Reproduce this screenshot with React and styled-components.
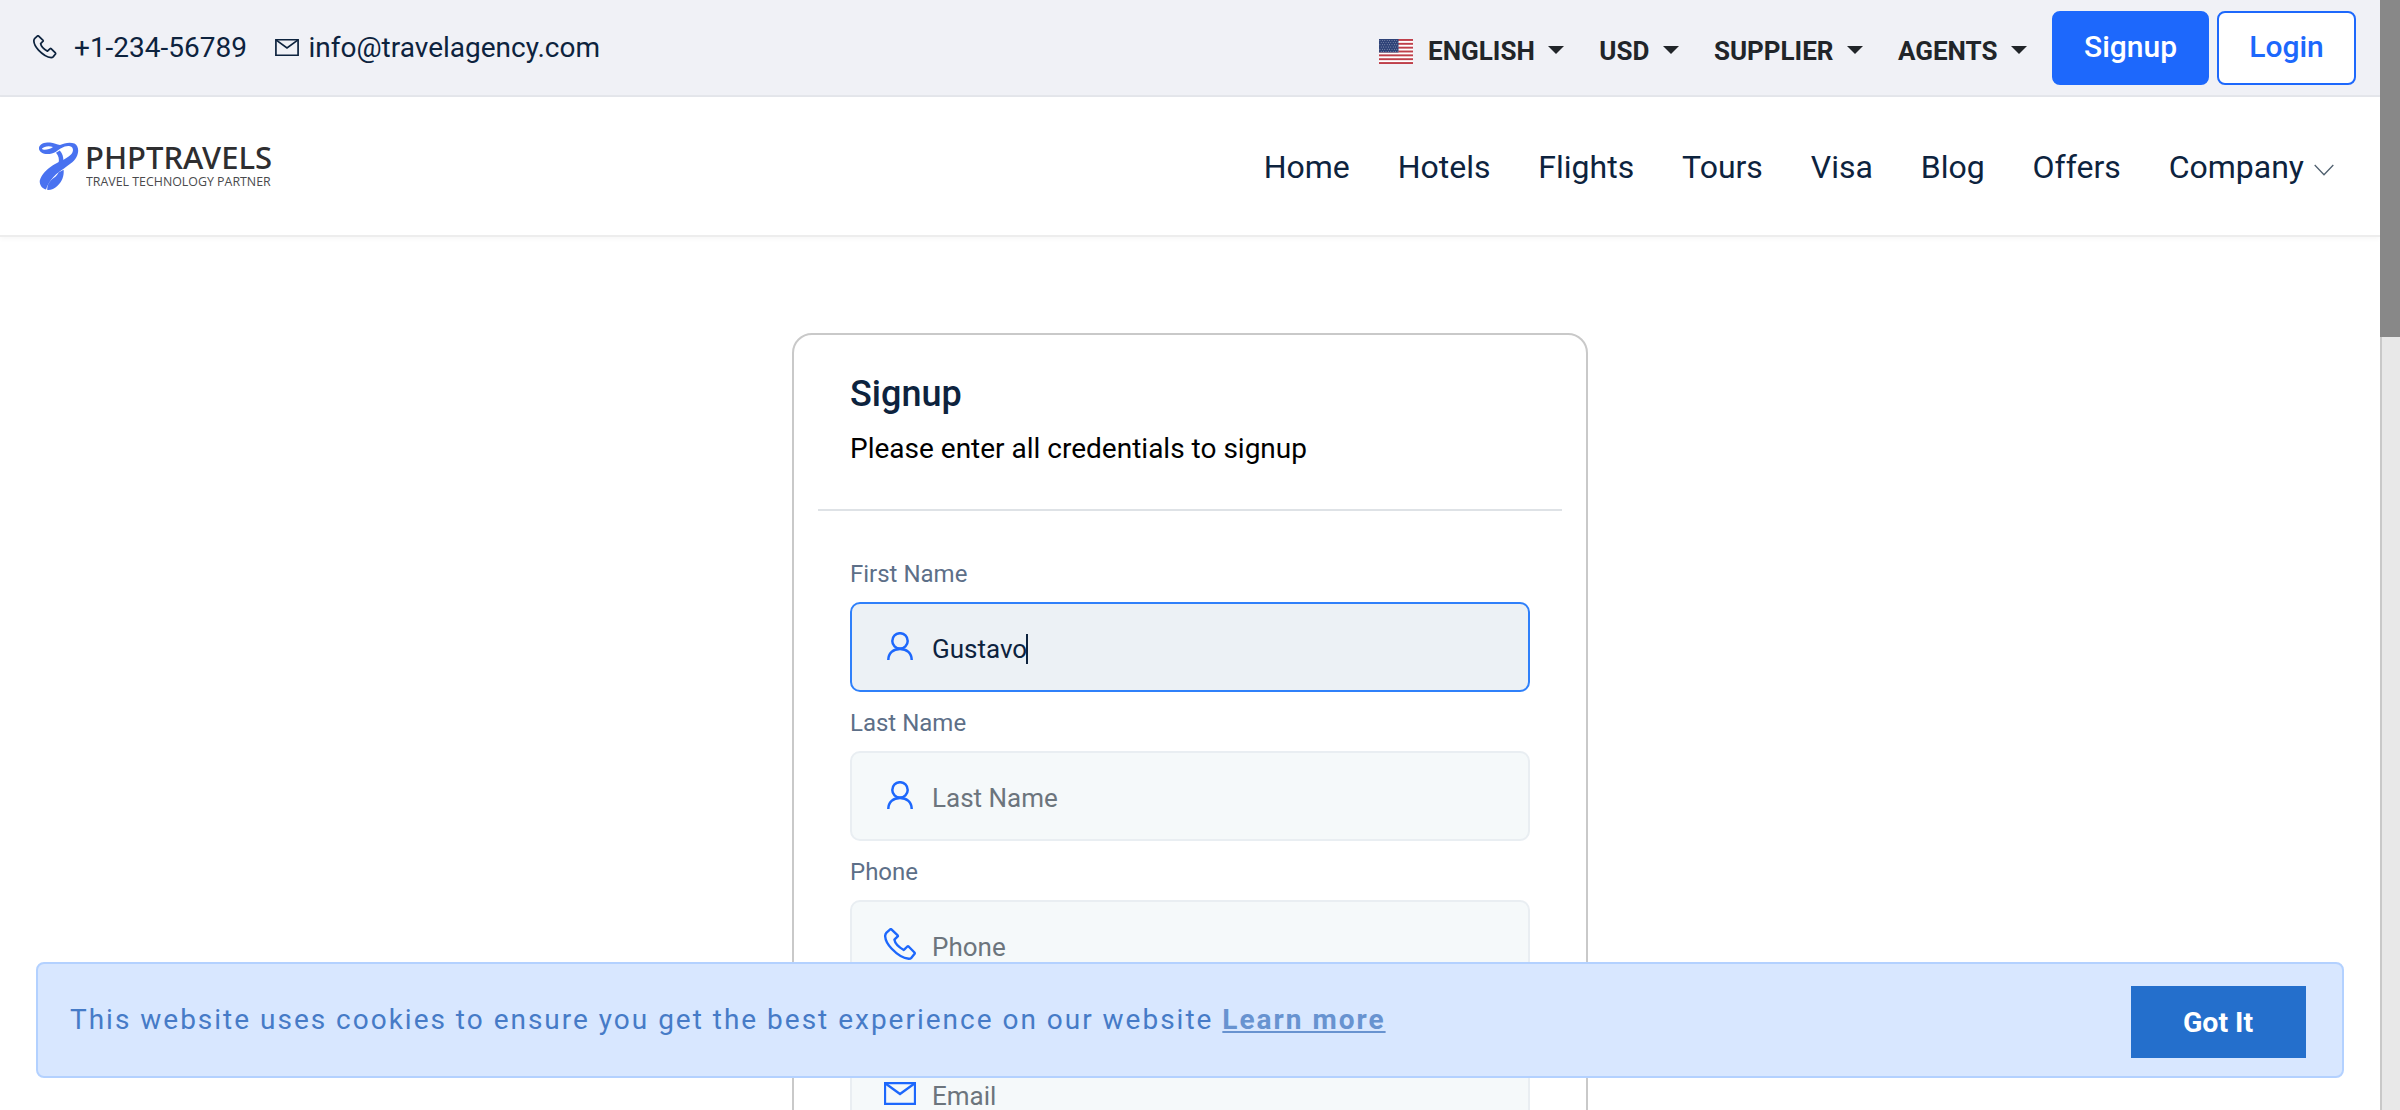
import React from "react";
import styled, { createGlobalStyle } from "styled-components";

const Global = createGlobalStyle`
  *, *::before, *::after { box-sizing: border-box; }
  html, body { margin: 0; padding: 0; }
  body {
    background: #fff;
    color: #0d233e;
    font-family: Roboto, "Liberation Sans", sans-serif;
    overflow: hidden;
  }
  input, button { font-family: inherit; }
  a { color: inherit; text-decoration: none; }
`;

const Screen = styled.div`
  display: flex;
  width: 2400px;
  height: 1110px;
  overflow: hidden;
`;

const Page = styled.div`
  flex: 1;
  min-width: 0;
  height: 1110px;
  overflow: hidden;
`;

const TopBar = styled.div`
  display: flex;
  justify-content: space-between;
  height: 97px;
  padding: 0 24px 0 33px;
  background: #f0f1f6;
  border-bottom: 2px solid #e4e6eb;
`;

const Contacts = styled.div`
  display: flex;
  align-items: center;
  height: 95px;
  font-size: 28px;
  line-height: 40px;
`;

const Contact = styled.a`
  display: flex;
  align-items: center;
  gap: ${(p) => p.$gap}px;
  margin-right: 28px;
  svg { display: block; margin-top: -1px; }
`;

const Menus = styled.div`
  display: flex;
  align-items: flex-start;
  padding-top: 11px;
`;

const Menu = styled.a`
  display: flex;
  align-items: center;
  height: 80px;
  margin-right: ${(p) => p.$after}px;
  color: #212529;
  font-size: 26px;
  font-weight: 700;
  line-height: 40px;
`;

const Caret = styled.span`
  width: 0;
  height: 0;
  margin-left: 13.5px;
  margin-top: -3px;
  border: 8px solid transparent;
  border-top-color: #212529;
  border-bottom: 0;
`;

const FlagBox = styled.span`
  display: flex;
  margin-right: 15px;
  margin-top: 1px;
`;

const TopButton = styled.button`
  width: ${(p) => p.$width}px;
  height: 74px;
  margin: 0 0 0 ${(p) => p.$before}px;
  padding: 0 0 3px;
  border: 2px solid #1d68fc;
  border-radius: 8px;
  background: ${(p) => (p.$filled ? "#1d68fc" : "#fff")};
  color: ${(p) => (p.$filled ? "#fff" : "#1d68fc")};
  font-size: 30px;
  font-weight: 500;
`;

const NavBar = styled.header`
  display: flex;
  align-items: center;
  justify-content: space-between;
  height: 140px;
  padding: 0 46px 0 39px;
  border-bottom: 2px solid #ededed;
  box-shadow: 0 2px 5px rgba(0, 0, 0, 0.035);
`;

const Brand = styled.a`
  display: flex;
  gap: 6px;
  width: 240px;
  svg { flex: none; }
`;

const BrandText = styled.div`
  display: flex;
  flex-direction: column;
  color: #2e2e30;
  font-family: "Noto Sans", "Open Sans", sans-serif;
  white-space: nowrap;
`;

const BrandName = styled.span`
  height: 31px;
  font-size: 31px;
  font-weight: 500;
  line-height: 31px;
  transform: scaleX(${(p) => p.$stretch});
  transform-origin: 0 50%;
`;

const BrandTag = styled.span`
  height: 16px;
  margin-left: 1px;
  font-family: "Open Sans", sans-serif;
  font-size: 13.4px;
  font-weight: 400;
  line-height: 16px;
  color: #4a4a4c;
  transform: scaleX(${(p) => p.$stretch});
  transform-origin: 0 50%;
`;

const Links = styled.nav`
  display: flex;
  gap: 47.9px;
  padding-top: 2px;
  font-size: 32px;
  line-height: 40px;
`;

const NavLink = styled.a`
  display: flex;
  align-items: center;
  gap: 10px;
  svg { margin-top: 6px; }
`;

const Card = styled.main`
  width: 796px;
  height: 1200px;
  margin: 96px auto 0;
  padding: 0 24px;
  border: 2px solid #c9c9c9;
  border-radius: 20px;
`;

const CardHead = styled.div`
  height: 176px;
  padding: 31px 32px 0;
  border-bottom: 2px solid #dee2e6;
`;

const Title = styled.h1`
  margin: 0;
  font-size: 36px;
  font-weight: 500;
  line-height: 57px;
`;

const Lead = styled.p`
  margin: 0;
  color: #000;
  font-size: 28px;
  line-height: 52px;
`;

const Form = styled.form`
  padding: 38px 32px 0;
`;

const Field = styled.div`
  height: 149px;
`;

const Label = styled.label`
  display: block;
  height: 53px;
  color: #5d6f88;
  font-size: 24px;
  line-height: 50px;
`;

const Control = styled.div`
  display: flex;
  align-items: center;
  height: 90px;
  padding-left: 30px;
  border: 2px solid ${(p) => (p.$active ? "#2f80fa" : "#e9eef2")};
  border-radius: 10px;
  background: ${(p) => (p.$active ? "#ecf1f5" : "#f5f9fa")};
`;

const IconSlot = styled.span`
  display: flex;
  justify-content: center;
  width: 36px;
  margin-right: 14px;
  padding-bottom: 2px;
`;

const Value = styled.span`
  padding-top: 3px;
  color: ${(p) => (p.$active ? "#0d233e" : "#6c757d")};
  font-size: 26px;
  line-height: 40px;
`;

const TextCursor = styled.span`
  width: 2px;
  height: 30px;
  margin-top: 3px;
  margin-left: -1px;
  background: #0d233e;
`;

const Cookie = styled.aside`
  position: fixed;
  left: 36px;
  top: 962px;
  display: flex;
  align-items: center;
  justify-content: space-between;
  width: 2308px;
  height: 116px;
  padding: 0 36px 0 32px;
  border: 2px solid #b3d1ff;
  border-radius: 8px;
  background: #d8e7ff;
`;

const CookieText = styled.p`
  margin: 0 0 1px;
  color: #467bc7;
  font-size: 28px;
  line-height: 40px;
  letter-spacing: 1.99px;
`;

const Learn = styled.a`
  color: #6893d0;
  font-weight: 700;
  text-decoration: underline;
`;

const GotIt = styled.button`
  width: 175px;
  height: 72px;
  margin-top: 4px;
  padding: 0 1px 0 0;
  border: 0;
  background: #246fcc;
  color: #fff;
  font-size: 28.5px;
  font-weight: 700;
`;

const Scrollbar = styled.div`
  width: 20px;
  height: 1110px;
  border-left: 2px solid #c9c9c9;
  background: #e8e8e8;
`;

const Thumb = styled.div`
  width: 20px;
  height: 337px;
  margin-left: -2px;
  background: #888;
`;

const PhoneIcon = ({ size, color }) => (
  <svg width={size} height={size} viewBox="0 0 32 32" fill="none" stroke={color} strokeWidth="2.4" strokeLinejoin="round">
    <path d="M7.4 1.300 L13.700 7.400 Q14.100 7.900 13.700 8.400 L10.400 11.600 Q11.200 17 19.800 22 L20.400 21.400 L23.400 18.500 Q24 18 24.600 18.500 L30.500 24.500 Q31 25.100 30.600 25.800 L27.400 29.800 Q26.400 30.800 24.800 30.800 Q16.500 30 7.500 20.500 Q1.500 14 1.200 8.500 Q1 6.200 2.500 4.600 L6.200 1.300 Q6.800 .8 7.400 1.300 Z" />
  </svg>
);

const MailIcon = ({ width, height, color }) => (
  <svg width={width} height={height} viewBox="0 0 32 23" fill="none" stroke={color} strokeWidth="2.3">
    <path d="M1 1 H31 V22 H1 Z" />
    <path d="M1.500 1.500 L16 12 L30.500 1.500" />
  </svg>
);

const UserIcon = () => (
  <svg width="26" height="28" viewBox="0 0 26 28" fill="none" stroke="#1d68fc" strokeWidth="2.5">
    <circle cx="13" cy="8.900" r="7.700" />
    <path d="M1.300 28 C1.300 21 6.200 16.900 13 16.900 S24.700 21 24.700 28" />
  </svg>
);

const stars = [];
for (let row = 0; row < 6; row += 1) {
  for (let col = 0; col < 8; col += 1) {
    stars.push([1 + col * 2.4 + (row % 2) * 1.2, 1.4 + row * 2.2]);
  }
}

const Flag = () => (
  <svg width="34" height="25" viewBox="0 0 34 25">
    <rect width="34" height="25" fill="#fff" />
    {[0, 1, 2, 3, 4, 5, 6].map((i) => (
      <rect key={i} y={i * 3.846} width="34" height="1.923" fill="#bf3f4a" />
    ))}
    <rect width="19.500" height="13.460" fill="#2f4378" />
    {stars.map(([x, y]) => (
      <circle key={`${x}-${y}`} cx={x} cy={y} r="0.45" fill="#fff" opacity="0.75" />
    ))}
  </svg>
);

const BrandMark = () => (
  <svg width="40" height="49" viewBox="0 0 40 49" fill="#4972f0">
    <path
      fillRule="evenodd"
      d="M0 5.500 C1 1.500 6 .3 11 .5 C15 .8 18 2.500 21 3 C25 1 31 -.3 35.500 1.500 C40 4 40 10.500 37.500 15 C34.500 20.500 29 23 25 26.500 C18 31 10.500 37 7 47.500 C2.500 46.500 .3 42 .8 38.500 C2.500 32 8 27.500 13.500 23.500 C19 20 27 17.500 32 12.500 C35 9 34.500 5 31 4.200 C25.500 3.200 21 7 17 9.700 C12.500 12.500 6 13 2.500 10.500 C.5 9 -.3 7.500 0 5.500 Z M2.800 6.800 C4.800 8.800 10.500 7.500 14 5 C10.500 3.600 5 4 2.800 6.800 Z"
    />
    <path d="M17 10.800 L20.800 8.600 C23.300 11.500 24.600 15 24.300 19 L19.500 21.500 C20.600 17 19.500 13.500 17 10.800 Z" />
    <path d="M24.600 27.800 C25.300 34 23 40 18 44.200 C15.500 46.500 12 48.300 8.300 48 C8 43 10.500 39 14 36.500 C18 33.800 18.800 32 19.500 30.500 Z" />
  </svg>
);

const ChevronDown = () => (
  <svg width="20" height="12" viewBox="0 0 20 12" fill="none" stroke="#50606f" strokeWidth="1.300">
    <path d="M.7 1 L10 10.700 L19.300 1" />
  </svg>
);

const menus = [
  { label: "ENGLISH", after: 35, flag: true },
  { label: "USD", after: 35 },
  { label: "SUPPLIER", after: 35 },
  { label: "AGENTS", after: 25 },
];

const links = ["Home", "Hotels", "Flights", "Tours", "Visa", "Blog", "Offers"];

const fields = [
  { label: "First Name", text: "Gustavo", icon: "user", active: true },
  { label: "Last Name", text: "Last Name", icon: "user" },
  { label: "Phone", text: "Phone", icon: "phone" },
  { text: "Email", icon: "mail" },
];

const icons = {
  user: <UserIcon />,
  phone: <PhoneIcon size={32} color="#1d68fc" />,
  mail: <MailIcon width={32} height={23} color="#1d68fc" />,
};

export default function App() {
  return (
    <>
      <Global />
      <Screen>
        <Page>
          <TopBar>
            <Contacts>
              <Contact $gap={17.5}>
                <PhoneIcon size={23.5} color="#0d233e" />
                +1-234-56789
              </Contact>
              <Contact $gap={9.5}>
                <MailIcon width={24} height={17} color="#0d233e" />
                info@travelagency.com
              </Contact>
            </Contacts>
            <Menus>
              {menus.map((m) => (
                <Menu key={m.label} $after={m.after}>
                  {m.flag && (
                    <FlagBox>
                      <Flag />
                    </FlagBox>
                  )}
                  {m.label}
                  <Caret />
                </Menu>
              ))}
              <TopButton $width={157} $before={0} $filled>
                Signup
              </TopButton>
              <TopButton $width={139} $before={8}>
                Login
              </TopButton>
            </Menus>
          </TopBar>
          <NavBar>
            <Brand>
              <BrandMark />
              <BrandText>
                <BrandName $stretch={1}>PHPTRAVELS</BrandName>
                <BrandTag $stretch={0.925}>TRAVEL TECHNOLOGY PARTNER</BrandTag>
              </BrandText>
            </Brand>
            <Links>
              {links.map((text) => (
                <NavLink key={text}>{text}</NavLink>
              ))}
              <NavLink>
                Company
                <ChevronDown />
              </NavLink>
            </Links>
          </NavBar>
          <Card>
            <CardHead>
              <Title>Signup</Title>
              <Lead>Please enter all credentials to signup</Lead>
            </CardHead>
            <Form>
              {fields.map((f) => (
                <Field key={f.text}>
                  <Label>{f.label}</Label>
                  <Control $active={f.active}>
                    <IconSlot>{icons[f.icon]}</IconSlot>
                    <Value $active={f.active}>{f.text}</Value>
                    {f.active && <TextCursor />}
                  </Control>
                </Field>
              ))}
            </Form>
          </Card>
        </Page>
        <Scrollbar>
          <Thumb />
        </Scrollbar>
      </Screen>
      <Cookie>
        <CookieText>
          This website uses cookies to ensure you get the best experience on our website <Learn>Learn more</Learn>
        </CookieText>
        <GotIt>Got It</GotIt>
      </Cookie>
    </>
  );
}
